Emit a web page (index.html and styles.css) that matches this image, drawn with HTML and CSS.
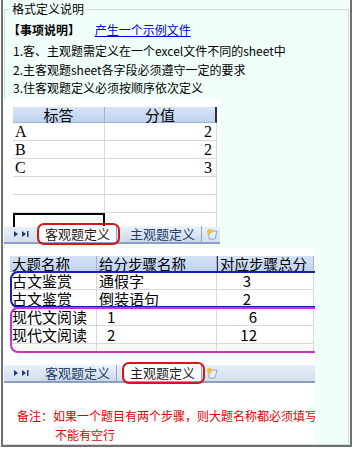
FILE: index.html
```html
<!DOCTYPE html>
<html lang="zh-CN">
  <head>
    <meta charset="UTF-8" />
    <title>格式定义说明</title>
    <link rel="stylesheet" href="styles.css">
  </head>
  <body>
    <div class="panel">
      <fieldset class="box">
        <legend class="box-title">格式定义说明</legend>
        <div class="intro">
          <span class="intro-label">【事项说明】</span>
          <a class="intro-link" href="#">产生一个示例文件</a>
        </div>
        <ol class="rules">
          <li>1.客、主观题需定义在一个excel文件不同的sheet中</li>
          <li>2.主客观题sheet各字段必须遵守一定的要求</li>
          <li>3.住客观题定义必须按顺序依次定义</li>
        </ol>

        <!-- 客观题 sheet 截图 -->
        <div class="shot shot-one">
          <div class="grid grid-one">
            <div class="hd">标答</div><div class="hd hd-last">分值</div>
            <div class="cell">A</div><div class="cell num">2</div>
            <div class="cell">B</div><div class="cell num">2</div>
            <div class="cell">C</div><div class="cell num">3</div>
            <div class="cell"></div><div class="cell"></div>
            <div class="cell"></div><div class="cell"></div>
            <div class="cell cell-cut cell-sel"></div><div class="cell cell-cut"></div>
          </div>
          <div class="tabbar">
            <svg class="nav" width="20" height="10" viewBox="0 0 20 10">
              <path d="M2 2 L6 5 L2 8 Z" fill="#1d3d7a"/>
              <path d="M10 2 L14 5 L10 8 Z" fill="#1d3d7a"/>
              <rect x="15" y="2" width="1.5" height="6" fill="#1d3d7a"/>
            </svg>
            <span class="tab tab-on tab-ring">客观题定义</span>
            <span class="tab">主观题定义</span>
            <svg class="newtab" width="12" height="12" viewBox="0 0 12 12">
              <path d="M3 3 H11 L9 11 H3 Z" fill="#e8eef8" stroke="#8fa6c6"/>
              <circle cx="3.5" cy="3.5" r="2.5" fill="#f2c230"/>
            </svg>
          </div>
        </div>

        <!-- 主观题 sheet 截图 -->
        <div class="shot shot-two">
          <div class="wrap">
            <div class="grid grid-two">
              <div class="hd">大题名称</div><div class="hd">给分步骤名称</div><div class="hd hd-dark">对应步骤总分</div>
              <div class="cell">古文鉴赏</div><div class="cell">通假字</div><div class="cell num num-a">3</div>
              <div class="cell">古文鉴赏</div><div class="cell">倒装语句</div><div class="cell num num-a">2</div>
              <div class="cell">现代文阅读</div><div class="cell step">1</div><div class="cell num num-b">6</div>
              <div class="cell">现代文阅读</div><div class="cell step">2</div><div class="cell num num-b">12</div>
              <div class="cell cell-short"></div><div class="cell cell-short"></div><div class="cell cell-short"></div>
            </div>
            <div class="mark mark-blue"></div>
            <div class="mark mark-pink"></div>
          </div>
          <div class="tabbar tabbar-wide">
            <svg class="nav" width="20" height="10" viewBox="0 0 20 10">
              <path d="M2 2 L6 5 L2 8 Z" fill="#1d3d7a"/>
              <path d="M10 2 L14 5 L10 8 Z" fill="#1d3d7a"/>
              <rect x="15" y="2" width="1.5" height="6" fill="#1d3d7a"/>
            </svg>
            <span class="tab">客观题定义</span>
            <span class="tab tab-on tab-ring">主观题定义</span>
            <svg class="newtab" width="12" height="12" viewBox="0 0 12 12">
              <path d="M3 3 H11 L9 11 H3 Z" fill="#e8eef8" stroke="#8fa6c6"/>
              <circle cx="3.5" cy="3.5" r="2.5" fill="#f2c230"/>
            </svg>
          </div>
          <p class="note">备注：如果一个题目有两个步骤，则大题名称都必须填写</p>
          <p class="note note-more">不能有空行</p>
        </div>
      </fieldset>
    </div>
  </body>
</html>
```

FILE: styles.css
```css
body {
  margin: 0;
  background: #ffffff;
  font-family: "Noto Sans CJK SC", "Liberation Sans", sans-serif;
  color: #000;
}

.panel {
  margin: 0 1px;
  width: 347px;
  border: 2px solid #707070;
  border-top: none;
  background: #f1fffa;
}

.box {
  margin: 0 1px;
  padding: 0;
  min-width: 0;
  border: 1px solid #d3dbd9;
}

.box-title {
  margin-left: 5px;
  padding: 0 2px;
  font-size: 12px;
  line-height: 18px;
}

.intro {
  padding-left: 3px;
  font-size: 12px;
  line-height: 24px;
}

.intro-label {
  font-weight: bold;
}

.intro-link {
  margin-left: 12px;
  color: #0000ee;
}

.rules {
  list-style: none;
  margin: 0;
  padding-left: 8px;
  font-size: 12px;
  line-height: 18.5px;
}

.shot {
  margin-left: -1px;
  background: #ffffff;
  overflow: hidden;
}

.shot-one {
  margin-top: 1px;
  width: 216px;
  padding: 8px 0 1px 9px;
  box-sizing: border-box;
}

.shot-two {
  margin-top: 3px;
  width: 311px;
  padding-top: 8px;
}

/* sheet grids */
.grid {
  display: grid;
}

.grid-one {
  grid-template-columns: 92px 112px;
}

.grid-two {
  grid-template-columns: 87px 120px 97px;
}

.hd {
  height: 16px;
  line-height: 16px;
  background: linear-gradient(#d6e3f5, #bfd3ee);
  border-right: 1px solid #9db3d3;
  border-bottom: 1px solid #9db3d3;
  box-sizing: border-box;
  font-size: 15px;
  text-align: center;
}

.hd-last {
  border-right: 2px solid #303030;
}

.grid-two .hd {
  text-align: left;
  font-size: 14.5px;
  padding-left: 2px;
}

.grid-two .hd-dark {
  border-left: 1px solid #333;
}

.cell {
  height: 18px;
  line-height: 18px;
  border-right: 1px solid #d4d9e2;
  border-bottom: 1px solid #d4d9e2;
  box-sizing: border-box;
  font-size: 15px;
  padding: 0 2px;
  white-space: nowrap;
}

.grid-one .cell {
  font-family: "Liberation Serif", serif;
  font-size: 16px;
}

.num {
  text-align: right;
}

.grid-one .num {
  padding-right: 4px;
}

.cell-cut {
  height: 14px;
  border-bottom: none;
}

.cell-sel {
  border: 2px solid #000;
  border-bottom: none;
}

.cell-short {
  height: 9px;
  border-bottom: none;
}

.step {
  padding-left: 10px;
}

.num-a {
  padding-right: 62px;
}

.num-b {
  padding-right: 56px;
}

.wrap {
  position: relative;
  margin-left: 6px;
}

.mark {
  position: absolute;
  left: 0;
  width: 310px;
  border: 2px solid;
  border-right: none;
  border-radius: 8px 0 0 8px;
  box-sizing: border-box;
}

.mark-blue {
  top: 15px;
  height: 37px;
  border-color: #1c1cae;
}

.mark-pink {
  top: 51px;
  height: 46px;
  border-color: #cc2fcc;
}

/* sheet tabs */
.tabbar {
  display: flex;
  align-items: center;
  height: 17px;
  margin-left: -9px;
  background: linear-gradient(#e9eff8, #d4deee);
  border-bottom: 2px solid #8aa0c0;
  box-sizing: border-box;
}

.tabbar-wide {
  margin: 12px 0 0 0;
  height: 18px;
}

.nav {
  margin-left: 8px;
  flex: none;
}

.tab {
  position: relative;
  flex: none;
  margin-left: 8px;
  padding: 0 6px 0 5px;
  height: 16px;
  line-height: 15px;
  font-size: 13px;
  color: #243c66;
  background: linear-gradient(#eef3fa, #c9d7ec);
  border-right: 1px solid #8ea6c8;
  white-space: nowrap;
}

.tab-on {
  background: #ffffff;
  color: #1c1c1c;
}

.tab-ring::after {
  content: "";
  position: absolute;
  left: -3px;
  right: -4px;
  top: -3px;
  bottom: -3px;
  border: 2px solid #d01818;
  border-radius: 7px;
}

.newtab {
  margin-left: 4px;
  flex: none;
}

.note {
  margin: 23px 0 0 13px;
  font-size: 12px;
  line-height: 19px;
  color: #e00000;
  white-space: nowrap;
}

.note-more {
  margin: 0 0 0 51px;
}
```
